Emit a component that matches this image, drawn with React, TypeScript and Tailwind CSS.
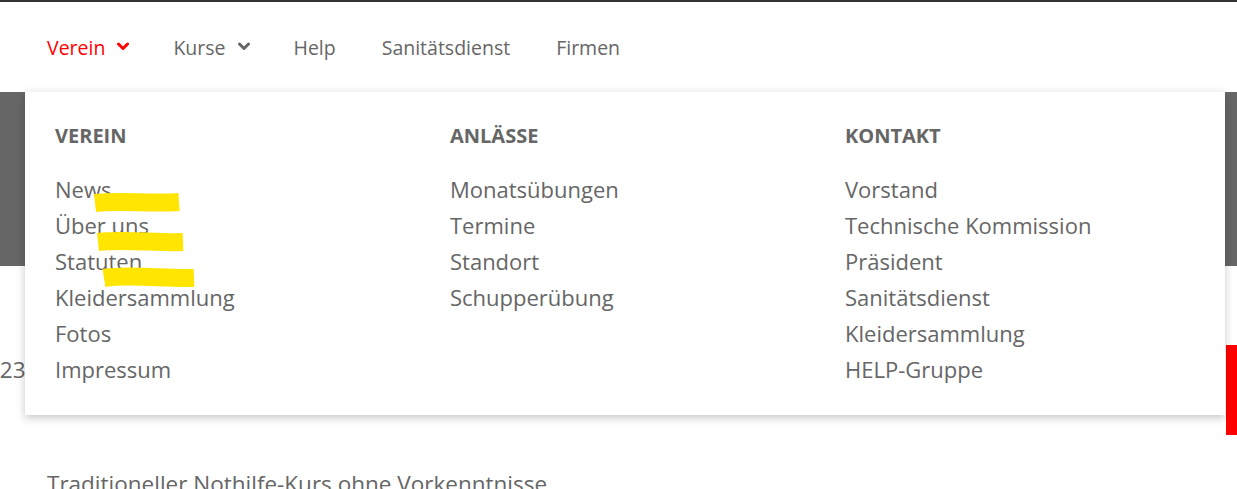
import React from "react";

const font = { fontFamily: '"Open Sans", "Noto Sans", sans-serif' };

function Chevron({ color }: { color: string }) {
  return (
    <svg width="12" height="9" viewBox="0 0 12 9" className="ml-[12px] mt-[-4px]">
      <path d="M1.5 2 L6 6.5 L10.5 2" fill="none" stroke={color} strokeWidth="3" strokeLinecap="round" strokeLinejoin="round" />
    </svg>
  );
}

const cols = [
  { title: "VEREIN", items: ["News", "Über uns", "Statuten", "Kleidersammlung", "Fotos", "Impressum"] },
  { title: "ANLÄSSE", items: ["Monatsübungen", "Termine", "Standort", "Schupperübung"] },
  { title: "KONTAKT", items: ["Vorstand", "Technische Kommission", "Präsident", "Sanitätsdienst", "Kleidersammlung", "HELP-Gruppe"] },
];

export default function App() {
  return (
    <div className="relative w-[1237px] h-[489px] overflow-hidden bg-white text-[#666]" style={font}>
      <div className="h-[2px] bg-[#333]" />
      <nav className="h-[90px] flex items-center pl-[47px] pt-[2px] text-[19.5px]">
        <span className="flex items-center text-[#ff0000]">Verein<Chevron color="#ff0000" /></span>
        <span className="flex items-center ml-[44px]">Kurse<Chevron color="#666" /></span>
        <span className="ml-[44px]">Help</span>
        <span className="ml-[46px]">Sanitätsdienst</span>
        <span className="ml-[46px]">Firmen</span>
      </nav>
      <div className="h-[174px] bg-[#666]" />
      <div className="relative h-[223px]">
        <div className="absolute left-[-13px] top-[88px] text-[22.5px] leading-[32px]">123</div>
        <div className="absolute right-0 top-[79px] w-[11px] h-[90px] bg-[#ff0000]" />
        <div className="absolute left-[47px] top-[203px] text-[22.5px] leading-[30px] whitespace-nowrap">Traditioneller Nothilfe-Kurs ohne Vorkenntnisse</div>
      </div>

      <div className="absolute left-[25px] top-[91px] w-[1200px] h-[324px] bg-white border-t border-[#f3f3f3] shadow-[0_3px_8px_rgba(0,0,0,0.22)]">
        <div className="flex pl-[30px] pt-[31px]">
          {cols.map((c) => (
            <div key={c.title} className="w-[395px] shrink-0">
              <div className="text-[20px] font-bold leading-[26px]">{c.title}</div>
              <ul className="mt-[22px]">
                {c.items.map((it) => (
                  <li key={it} className="text-[22px] leading-[36px] whitespace-nowrap">{it}</li>
                ))}
              </ul>
            </div>
          ))}
        </div>
        <svg className="absolute left-0 top-0 pointer-events-none" width="1200" height="324">
          <path d="M70 111 C 95 108, 125 112, 154 110" stroke="#ffe500" strokeWidth="18" fill="none" strokeLinecap="butt" />
          <path d="M73 150 C 100 147, 130 151, 158 150" stroke="#ffe500" strokeWidth="18" fill="none" strokeLinecap="butt" />
          <path d="M79 186 C 105 182, 140 187, 169 186" stroke="#ffe500" strokeWidth="18" fill="none" strokeLinecap="butt" />
        </svg>
      </div>
    </div>
  );
}
